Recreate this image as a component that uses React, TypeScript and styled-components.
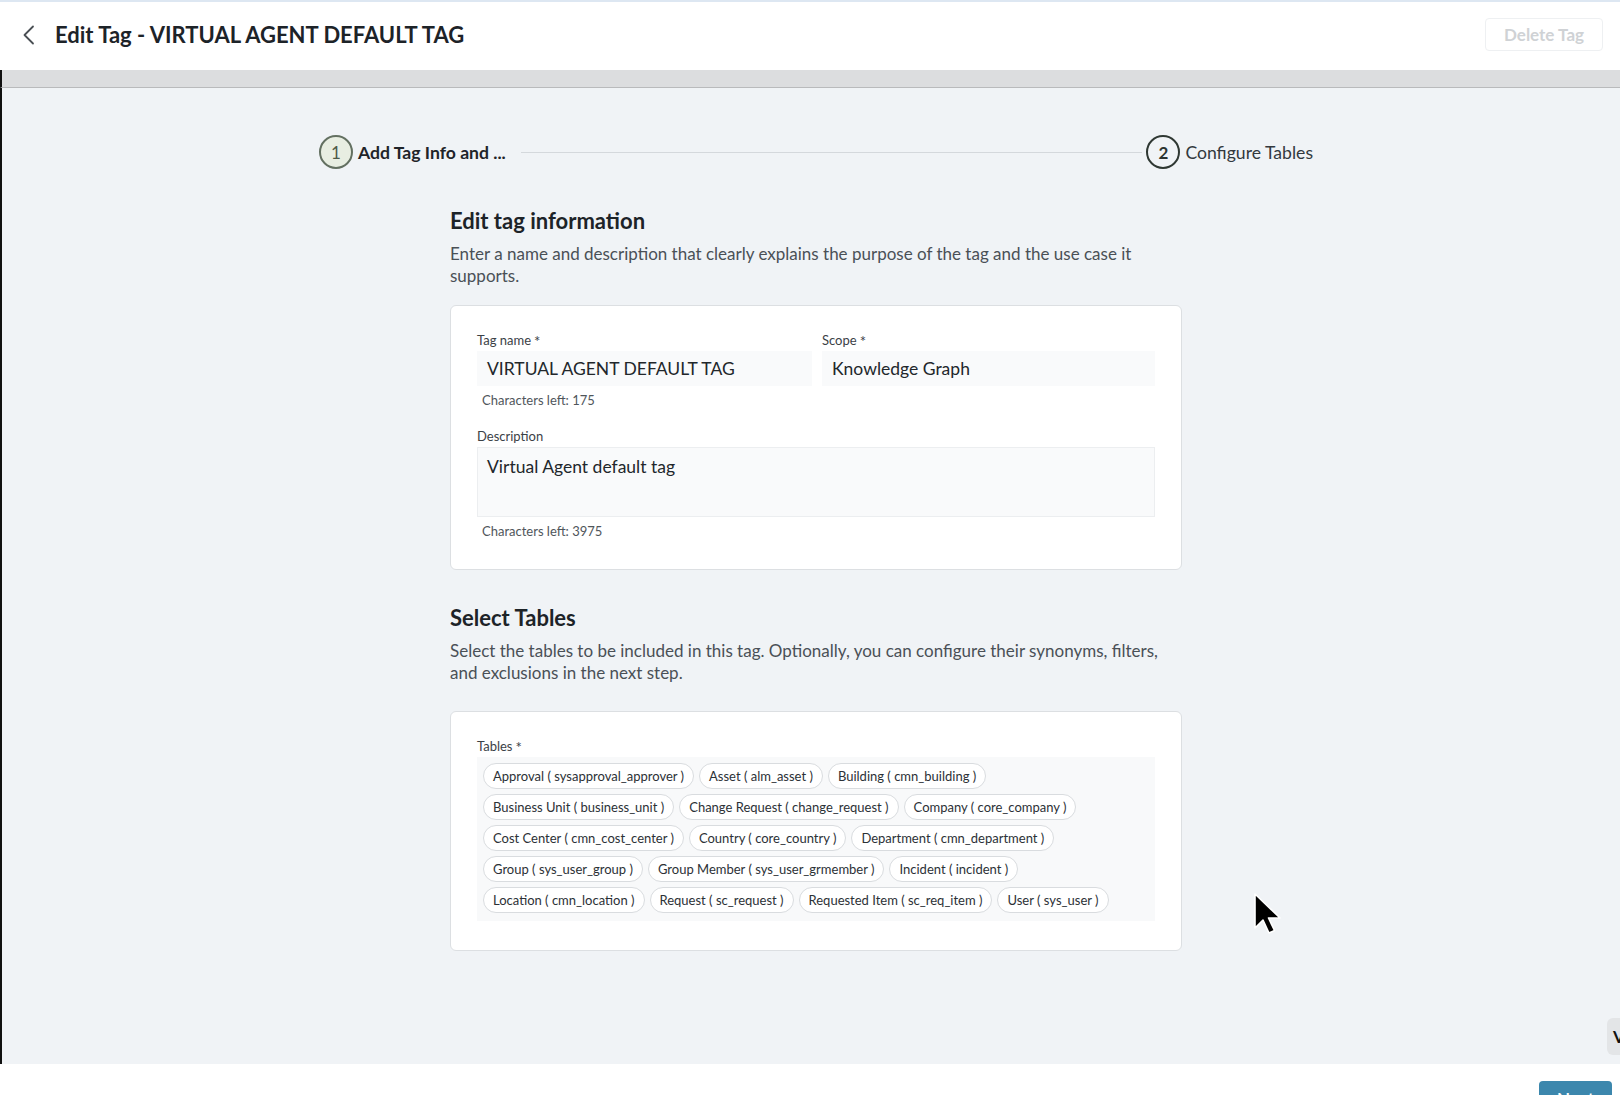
import React from 'react';
import styled, { createGlobalStyle } from 'styled-components';

const GlobalStyle = createGlobalStyle`
  html, body {
    margin: 0;
    padding: 0;
    font-family: Lato, "Open Sans", "Liberation Sans", sans-serif;
    background: #f0f3f6;
    color: #1f2429;
  }
  * { box-sizing: border-box; }
`;

const Shell = styled.div`
  height: 100vh;
  display: flex;
  flex-direction: column;
  overflow: hidden;
`;

const Header = styled.header`
  height: 70px;
  flex-shrink: 0;
  background: #ffffff;
  border-top: 2px solid #dde7f2;
  display: flex;
  align-items: center;
  padding: 0 17px 3px 22px;
`;

const BackButton = styled.button`
  border: none;
  background: none;
  padding: 0;
  margin-right: 20px;
  display: flex;
  align-items: center;
  cursor: pointer;
`;

const Title = styled.h1`
  margin: 0;
  font-size: 22px;
  font-weight: 700;
  color: #1d2328;
  flex: 1;
`;

const GhostButton = styled.button`
  height: 33px;
  width: 118px;
  border: 1px solid #eef0f2;
  border-radius: 4px;
  background: #ffffff;
  color: #cfd2d5;
  font-family: inherit;
  font-size: 17px;
  font-weight: 700;
`;

const Band = styled.div`
  height: 18px;
  flex-shrink: 0;
  background: #dcdddf;
  border-bottom: 1px solid #b9babc;
  border-left: 2px solid #101010;
`;

const Main = styled.main`
  flex: 1;
  position: relative;
  background: #f0f3f6;
  border-left: 2px solid #101010;
  padding: 47px 0 0 10px;
  overflow: hidden;
`;

const Stepper = styled.div`
  width: 994px;
  margin: 0 auto;
  display: flex;
  align-items: center;
`;

const Step = styled.div`
  display: flex;
  align-items: center;
  gap: 5px;
`;

const StepCircle = styled.span<{ $active?: boolean }>`
  width: 34px;
  height: 34px;
  border-radius: 50%;
  display: flex;
  align-items: center;
  justify-content: center;
  font-size: 17px;
  font-weight: ${p => (p.$active ? 400 : 700)};
  color: ${p => (p.$active ? '#4d5a48' : '#2b3330')};
  background: ${p => (p.$active ? '#e8eee2' : 'transparent')};
  border: 2px solid ${p => (p.$active ? '#637061' : '#2f3833')};
`;

const StepLabel = styled.span<{ $active?: boolean }>`
  font-size: 17.6px;
  font-weight: ${p => (p.$active ? 700 : 400)};
  color: ${p => (p.$active ? '#1f2429' : '#33393e')};
`;

const StepLine = styled.div`
  flex: 1;
  height: 1px;
  background: #d4d8dc;
  margin: 0 4px 0 15px;
`;

const Column = styled.div`
  width: 732px;
  margin: 39px auto 0;
`;

const SectionTitle = styled.h2<{ $top?: number }>`
  margin: ${p => p.$top ?? 0}px 0 0;
  font-size: 22px;
  line-height: 26px;
  font-weight: 700;
  color: #1d2328;
`;

const SectionText = styled.p<{ $gap: number }>`
  margin: 9px 0 ${p => p.$gap}px;
  font-size: 17px;
  line-height: 22px;
  color: #4a5056;
`;

const Card = styled.section<{ $bottom?: number }>`
  background: #ffffff;
  border: 1px solid #dcdfe2;
  border-radius: 6px;
  padding: 26px 26px ${p => p.$bottom ?? 30}px;
`;

const FieldRow = styled.div`
  display: grid;
  grid-template-columns: 335px 1fr;
  gap: 10px;
`;

const Field = styled.div<{ $top?: number }>`
  display: flex;
  flex-direction: column;
  margin-top: ${p => p.$top ?? 0}px;
`;

const Label = styled.label`
  font-size: 13px;
  line-height: 16px;
  color: #3b4146;
  margin-bottom: 3px;
`;

const Required = styled.span`
  font-size: 15px;
  line-height: 0;
  margin-left: 3px;
  position: relative;
  top: 2px;
`;

const InputBox = styled.div`
  height: 35px;
  background: #f9fafb;
  padding: 0 10px;
  display: flex;
  align-items: center;
  font-size: 17.5px;
  color: #22272b;
`;

const TextBox = styled.div`
  height: 70px;
  background: #f9fafb;
  border: 1px solid #eceef0;
  padding: 8px 9px;
  font-size: 17.5px;
  line-height: 22px;
  color: #22272b;
`;

const Hint = styled.span`
  font-size: 13px;
  line-height: 16px;
  color: #50565b;
  margin: 6px 0 0 5px;
`;

const ChipBox = styled.div`
  background: #f8f9fa;
  padding: 6px 6px 8px;
  display: flex;
  flex-wrap: wrap;
  gap: 5px;
`;

const Chip = styled.span`
  height: 26px;
  padding: 0 9px;
  border: 1px solid #d9dcdf;
  border-radius: 13px;
  background: #ffffff;
  display: inline-flex;
  align-items: center;
  font-size: 13px;
  color: #2c3136;
  white-space: nowrap;
`;

const Pointer = styled.svg`
  position: absolute;
  left: 1251px;
  top: 804px;
`;

const SideTab = styled.div`
  position: absolute;
  right: 0;
  bottom: 9px;
  width: 13px;
  height: 37px;
  background: #e3e5e7;
  border-radius: 6px 0 0 6px;
  overflow: hidden;
  font-size: 17px;
  font-weight: 700;
  color: #111;
  padding: 8px 0 0 6px;
`;

const Footer = styled.footer`
  height: 31px;
  flex-shrink: 0;
  background: #ffffff;
  box-shadow: 0 -2px 6px rgba(0, 0, 0, 0.03);
  display: flex;
  justify-content: flex-end;
  align-items: flex-start;
  padding: 17px 8px 0 0;
  overflow: hidden;
`;

const PrimaryButton = styled.button`
  width: 73px;
  height: 34px;
  flex-shrink: 0;
  border: none;
  border-radius: 4px;
  background: #3c87ad;
  color: #ffffff;
  font-family: inherit;
  font-size: 17px;
  font-weight: 700;
`;

const tables = [
  'Approval ( sysapproval_approver )',
  'Asset ( alm_asset )',
  'Building ( cmn_building )',
  'Business Unit ( business_unit )',
  'Change Request ( change_request )',
  'Company ( core_company )',
  'Cost Center ( cmn_cost_center )',
  'Country ( core_country )',
  'Department ( cmn_department )',
  'Group ( sys_user_group )',
  'Group Member ( sys_user_grmember )',
  'Incident ( incident )',
  'Location ( cmn_location )',
  'Request ( sc_request )',
  'Requested Item ( sc_req_item )',
  'User ( sys_user )',
];

const App: React.FC = () => {
  return (
    <Shell>
      <GlobalStyle />
      <Header>
        <BackButton aria-label="Back">
          <svg width="13" height="20" viewBox="0 0 13 20">
            <path d="M11 1.5 L2.5 10 L11 18.5" fill="none" stroke="#4a4f54" strokeWidth="1.8" strokeLinecap="round" strokeLinejoin="round" />
          </svg>
        </BackButton>
        <Title>Edit Tag - VIRTUAL AGENT DEFAULT TAG</Title>
        <GhostButton disabled>Delete Tag</GhostButton>
      </Header>
      <Band />

      <Main>
        <Stepper>
          <Step>
            <StepCircle $active>1</StepCircle>
            <StepLabel $active>Add Tag Info and ...</StepLabel>
          </Step>
          <StepLine />
          <Step>
            <StepCircle>2</StepCircle>
            <StepLabel>Configure Tables</StepLabel>
          </Step>
        </Stepper>

        <Column>
          <SectionTitle>Edit tag information</SectionTitle>
          <SectionText $gap={18}>
            Enter a name and description that clearly explains the purpose of the tag and the use case it supports.
          </SectionText>
          <Card>
            <FieldRow>
              <Field>
                <Label>Tag name<Required>*</Required></Label>
                <InputBox>VIRTUAL AGENT DEFAULT TAG</InputBox>
                <Hint>Characters left: 175</Hint>
              </Field>
              <Field>
                <Label>Scope<Required>*</Required></Label>
                <InputBox>Knowledge Graph</InputBox>
              </Field>
            </FieldRow>
            <Field $top={20}>
              <Label>Description</Label>
              <TextBox>Virtual Agent default tag</TextBox>
              <Hint>Characters left: 3975</Hint>
            </Field>
          </Card>

          <SectionTitle $top={35}>Select Tables</SectionTitle>
          <SectionText $gap={27}>
            Select the tables to be included in this tag. Optionally, you can configure their synonyms, filters, and exclusions in the next step.
          </SectionText>
          <Card $bottom={29}>
            <Field>
              <Label>Tables<Required>*</Required></Label>
              <ChipBox>
                {tables.map(t => (
                  <Chip key={t}>{t}</Chip>
                ))}
              </ChipBox>
            </Field>
          </Card>
        </Column>

        <Pointer width="30" height="46" viewBox="0 0 30 46">
          <path d="M2 2 L2 36 L10 28 L16 41 L21.5 38.5 L15.5 26 L27 26 Z" fill="#000" stroke="#fff" strokeWidth="1.6" strokeLinejoin="round" />
        </Pointer>
        <SideTab>V</SideTab>
      </Main>

      <Footer>
        <PrimaryButton>Next</PrimaryButton>
      </Footer>
    </Shell>
  );
};

export default App;
